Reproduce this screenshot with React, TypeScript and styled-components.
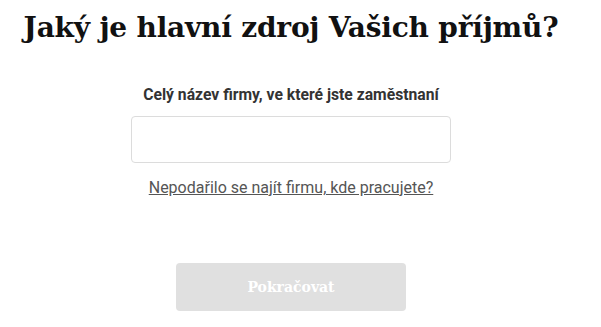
import React from 'react'
import styled, { createGlobalStyle } from 'styled-components'

const GlobalStyle = createGlobalStyle`
  html, body {
    margin: 0;
    padding: 0;
    background: #fff;
  }
  body {
    font-family: Roboto, "Liberation Sans", sans-serif;
  }
`

const Page = styled.main`
  display: flex;
  flex-direction: column;
  align-items: center;
  width: 582px;
  padding-top: 9px;
`

const Title = styled.h1`
  margin: 0;
  font-family: "DejaVu Serif", "Liberation Serif", serif;
  font-weight: 700;
  font-size: 28px;
  line-height: 38px;
  color: #111;
  letter-spacing: -0.2px;
`

const Field = styled.div`
  display: flex;
  flex-direction: column;
  align-items: center;
  margin-top: 38px;
`

const Label = styled.label`
  font-size: 15.7px;
  font-weight: 700;
  line-height: 20px;
  color: #333;
`

const Input = styled.input`
  box-sizing: border-box;
  width: 320px;
  height: 47px;
  margin-top: 11px;
  border: 1px solid #dcdcdc;
  border-radius: 4px;
  outline: none;
  padding: 0 12px;
  font-family: inherit;
  font-size: 16px;
`

const HelpLink = styled.a`
  margin-top: 15px;
  font-size: 16px;
  line-height: 20px;
  color: #555;
  text-decoration: underline;
  cursor: pointer;
`

const SubmitButton = styled.button`
  margin-top: 65px;
  width: 230px;
  height: 48px;
  border: none;
  border-radius: 4px;
  background: #e0e0e0;
  color: #fff;
  font-family: "DejaVu Serif", "Liberation Serif", serif;
  font-weight: 700;
  font-size: 14px;
  cursor: not-allowed;
`

export default function App() {
  return (
    <>
      <GlobalStyle />
      <Page>
        <Title>Jaký je hlavní zdroj Vašich příjmů?</Title>
        <Field>
          <Label htmlFor="company">Celý název firmy, ve které jste zaměstnaní</Label>
          <Input id="company" type="text" />
          <HelpLink>Nepodařilo se najít firmu, kde pracujete?</HelpLink>
        </Field>
        <SubmitButton disabled>Pokračovat</SubmitButton>
      </Page>
    </>
  )
}
